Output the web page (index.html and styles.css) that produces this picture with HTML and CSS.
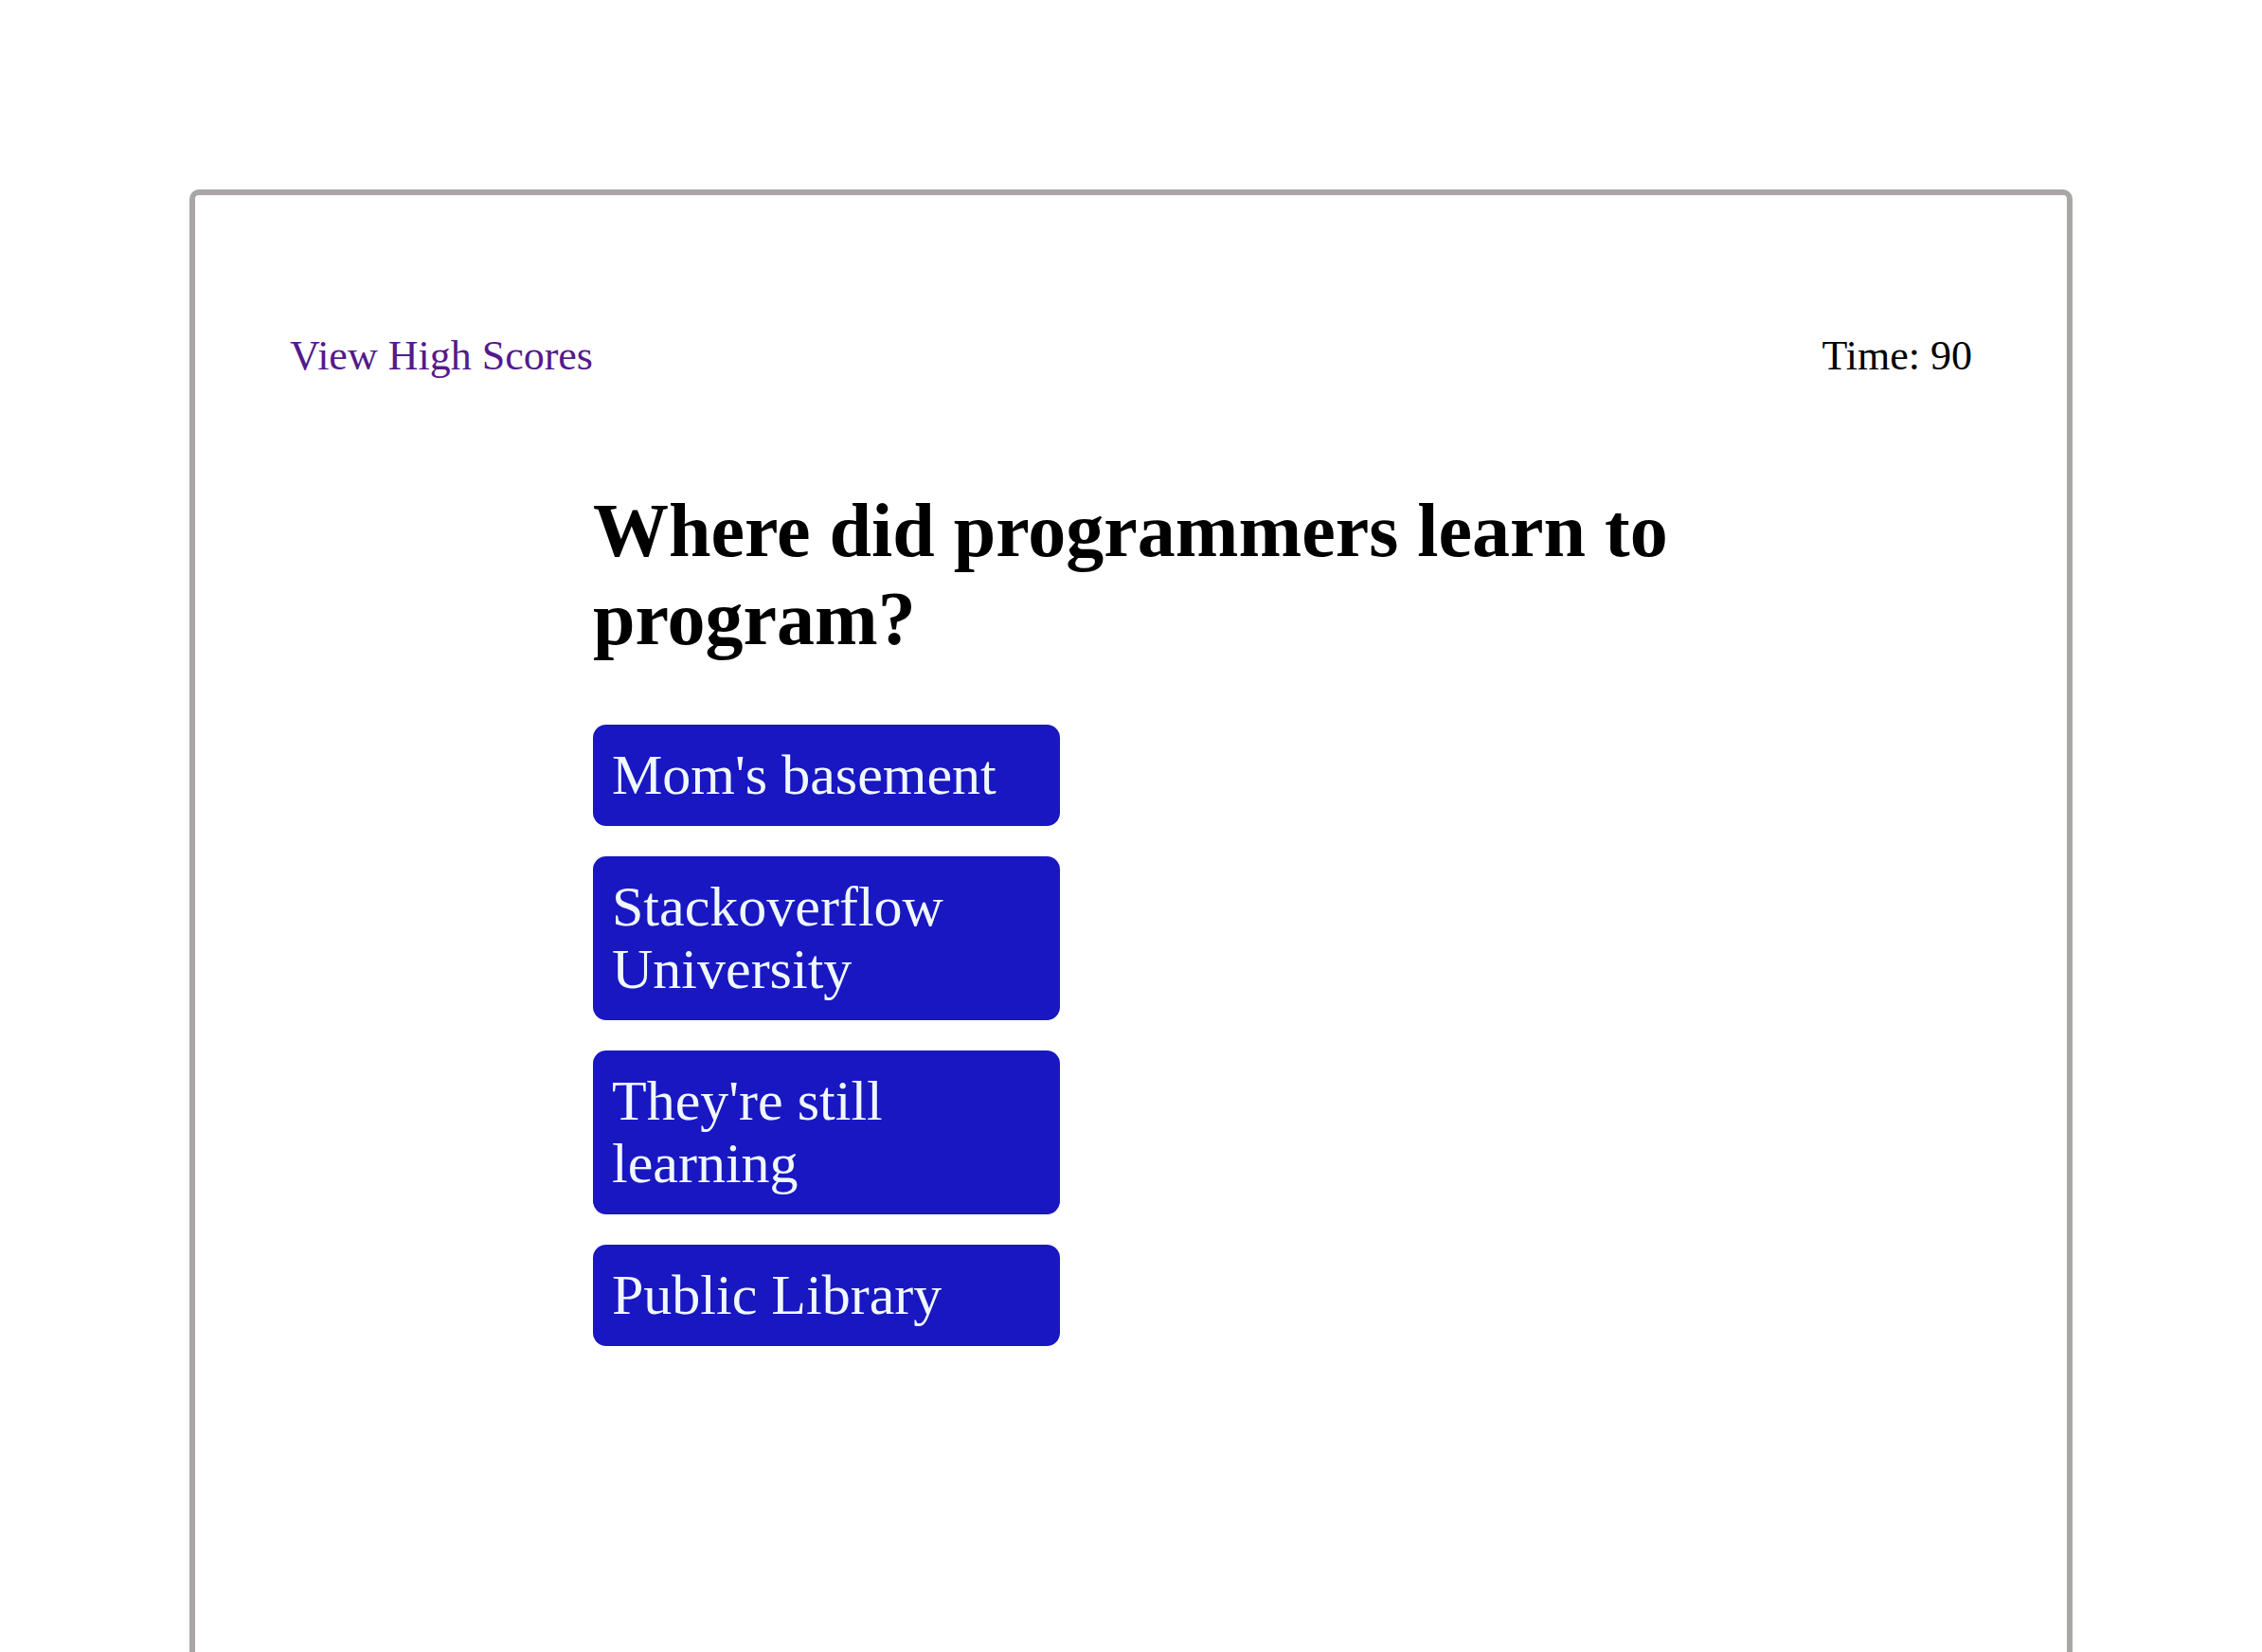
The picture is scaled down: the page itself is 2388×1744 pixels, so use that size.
FILE: index.html
```html
<!DOCTYPE html>
<html lang="en">
<head>
<meta charset="utf-8">
<title>Code Quiz</title>
<link rel="stylesheet" href="styles.css">
</head>
<body>
<div class="card">
  <header class="topbar">
    <a class="scores-link" href="#">View High Scores</a>
    <span class="timer">Time: 90</span>
  </header>
  <main class="quiz">
    <h1 class="question">Where did programmers learn to program?</h1>
    <div class="answers">
      <button class="answer">Mom's basement</button>
      <button class="answer">Stackoverflow University</button>
      <button class="answer">They're still learning</button>
      <button class="answer">Public Library</button>
    </div>
  </main>
</div>
</body>
</html>
```

FILE: styles.css
```css
html, body {
  margin: 0;
  padding: 0;
  background: #ffffff;
}

body {
  font-family: "Liberation Serif", "Times New Roman", serif;
  color: #000000;
}

.card {
  box-sizing: border-box;
  width: 1988px;
  min-height: 1700px;
  margin: 200px auto 0;
  border: 6px solid #aaa6a6;
  border-radius: 10px;
  padding: 144px 100px 0;
}

.topbar {
  display: flex;
  justify-content: space-between;
  align-items: baseline;
  font-size: 44px;
}

.scores-link {
  color: #551a8b;
  text-decoration: none;
}

.timer {
  color: #000000;
}

.quiz {
  width: 1136px;
  margin: 0 auto;
}

.question {
  margin: 113px 0 65px;
  font-size: 80px;
  line-height: 93px;
  font-weight: bold;
}

.answers {
  display: flex;
  flex-direction: column;
  align-items: flex-start;
  gap: 31.5px;
}

.answer {
  box-sizing: border-box;
  width: 493px;
  padding: 20.25px 20px;
  border: none;
  border-radius: 14px;
  background: #1917c1;
  color: #f0f8ff;
  font-family: "Liberation Serif", "Times New Roman", serif;
  font-size: 60px;
  line-height: 66.5px;
  text-align: left;
  cursor: pointer;
}
```
